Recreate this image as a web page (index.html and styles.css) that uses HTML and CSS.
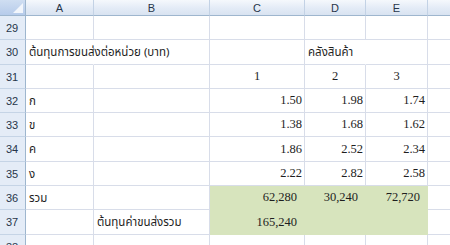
FILE: index.html
```html
<!DOCTYPE html>
<html lang="th">
<head>
<meta charset="utf-8">
<link rel="stylesheet" href="styles.css">
</head>
<body>
<div class="sheet">
  <div class="corner"><span class="tri"></span></div>
  <div class="ch">A</div><div class="ch">B</div><div class="ch">C</div><div class="ch">D</div><div class="ch">E</div><div class="ch last"></div>

  <div class="rh">29</div><div class="c"></div><div class="c"></div><div class="c"></div><div class="c"></div><div class="c"></div><div class="c"></div>

  <div class="rh">30</div><div class="c th ovf">ต้นทุนการขนส่งต่อหน่วย (บาท)</div><div class="c"></div><div class="c"></div><div class="c th ovf">คลังสินค้า</div><div class="c"></div><div class="c"></div>

  <div class="rh">31</div><div class="c"></div><div class="c"></div><div class="c num mid">1</div><div class="c num mid">2</div><div class="c num mid">3</div><div class="c"></div>

  <div class="rh">32</div><div class="c th">ก</div><div class="c"></div><div class="c num">1.50</div><div class="c num">1.98</div><div class="c num">1.74</div><div class="c"></div>

  <div class="rh">33</div><div class="c th">ข</div><div class="c"></div><div class="c num">1.38</div><div class="c num">1.68</div><div class="c num">1.62</div><div class="c"></div>

  <div class="rh">34</div><div class="c th">ค</div><div class="c"></div><div class="c num">1.86</div><div class="c num">2.52</div><div class="c num">2.34</div><div class="c"></div>

  <div class="rh">35</div><div class="c th">ง</div><div class="c"></div><div class="c num">2.22</div><div class="c num">2.82</div><div class="c num">2.58</div><div class="c"></div>

  <div class="rh">36</div><div class="c th">รวม</div><div class="c"></div><div class="c num fill acc">62,280</div><div class="c num fill acc">30,240</div><div class="c num fill acc">72,720</div><div class="c"></div>

  <div class="rh">37</div><div class="c"></div><div class="c th">ต้นทุนค่าขนส่งรวม</div><div class="c num fill acc">165,240</div><div class="c fill"></div><div class="c fill"></div><div class="c"></div>

  <div class="rh">38</div><div class="c"></div><div class="c"></div><div class="c"></div><div class="c"></div><div class="c"></div><div class="c"></div>
</div>
</body>
</html>
```
FILE: styles.css
```css
html, body {
  margin: 0;
  padding: 0;
  background: #ffffff;
  overflow: hidden;
}

.sheet {
  display: grid;
  grid-template-columns: 26px 68px 116px 95px 61px 62px 40px;
  grid-template-rows: 16px 24px 25px 24px 24px 24px 25px 24px 24px 25px 24px;
  width: 450px;
  height: 245px;
  overflow: hidden;
  font-family: "Liberation Serif", serif;
  color: #1e1e1e;
}

.sheet > div {
  box-sizing: border-box;
}

.corner {
  position: relative;
  background: linear-gradient(#cfdef2, #b6cbea);
  border-right: 1px solid #9eb6ce;
  border-bottom: 1px solid #9eb6ce;
}

.tri {
  position: absolute;
  right: 2px;
  bottom: 2px;
  width: 0;
  height: 0;
  border-left: 10px solid transparent;
  border-bottom: 10px solid #f2f6fc;
}

.ch {
  background: linear-gradient(#f5f8fc, #e3ebf6 55%, #d9e3f1);
  border-right: 1px solid #c3d2e5;
  border-bottom: 1px solid #9eb6ce;
  font-family: "Liberation Sans", sans-serif;
  font-size: 11px;
  color: #27364a;
  display: flex;
  align-items: center;
  justify-content: center;
}

.rh {
  background: #e4ecf7;
  border-right: 1px solid #9eb6ce;
  border-bottom: 1px solid #c5d4e6;
  font-family: "Liberation Sans", sans-serif;
  font-size: 11px;
  color: #27364a;
  display: flex;
  align-items: center;
  padding-left: 6px;
}

.c {
  border-right: 1px solid #d8dde9;
  border-bottom: 1px solid #d8dde9;
  display: flex;
  align-items: center;
  white-space: nowrap;
  font-size: 12.5px;
}

.th {
  font-family: "Noto Sans Thai", "Tahoma", "DejaVu Sans", sans-serif;
  font-size: 11.5px;
  padding-left: 3px;
  padding-top: 1px;
}

.ovf {
  overflow: visible;
  z-index: 1;
  border-right-color: transparent;
}

.num {
  justify-content: flex-end;
  padding-right: 2px;
}

.mid {
  justify-content: center;
  padding-right: 0;
}

.fill {
  background: #d7e4bd;
  border-color: #d7e4bd;
}

.acc {
  padding-right: 7px;
}
```
